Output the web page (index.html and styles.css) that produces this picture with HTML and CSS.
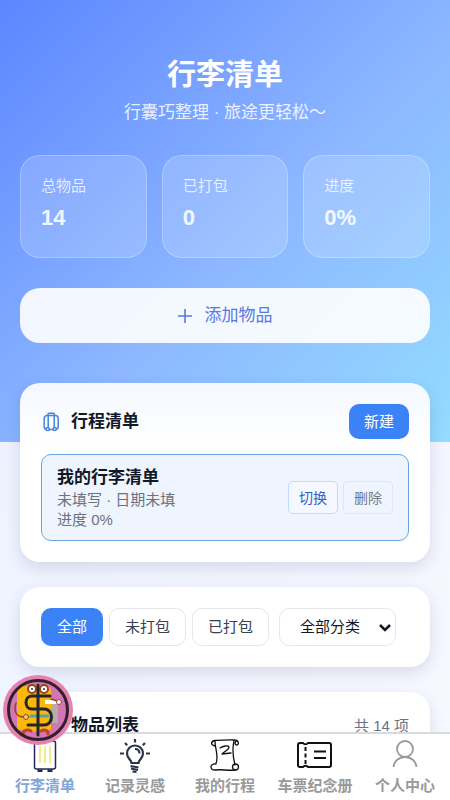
FILE: index.html
```html
<!DOCTYPE html>
<html lang="zh-CN">
<head>
<meta charset="utf-8">
<meta name="viewport" content="width=device-width, initial-scale=1">
<title>行李清单</title>
<link rel="stylesheet" href="styles.css">
</head>
<body>
<div class="app">
  <main class="content">
    <header class="hero">
      <h1>行李清单</h1>
      <p>行囊巧整理 · 旅途更轻松～</p>
    </header>
    <section class="stats">
      <div class="stat"><span>总物品</span><strong>14</strong></div>
      <div class="stat"><span>已打包</span><strong>0</strong></div>
      <div class="stat"><span>进度</span><strong>0%</strong></div>
    </section>
    <button class="add" type="button">
      <svg width="14" height="14" viewBox="0 0 14 14" fill="none" stroke="currentColor" stroke-width="1.6" aria-hidden="true"><path d="M7 0v14M0 7h14"/></svg>
      添加物品
    </button>
    <section class="card trips">
      <div class="card-head">
        <svg class="head-icon" width="20" height="20" viewBox="0 0 20 20" fill="none" stroke="currentColor" stroke-width="1.5" aria-hidden="true"><rect x="3.200" y="3.500" width="14" height="14" rx="3"/><path d="M7 3.500V2.300q0-1 1-1h4.400q1 0 1 1v1.200M7.200 3.500v12M13.200 3.500v12"/><circle cx="6.700" cy="17" r="1.600" fill="#f8fbff"/><circle cx="13.700" cy="17" r="1.600" fill="#f8fbff"/></svg>
        <h2>行程清单</h2>
        <button class="primary new" type="button">新建</button>
      </div>
      <article class="trip">
        <div class="trip-info">
          <h3>我的行李清单</h3>
          <p>未填写 · 日期未填</p>
          <p>进度 0%</p>
        </div>
        <button class="small switch" type="button">切换</button>
        <button class="small delete" type="button">删除</button>
      </article>
    </section>
    <section class="card filters">
      <button class="chip primary" type="button">全部</button>
      <button class="chip" type="button">未打包</button>
      <button class="chip" type="button">已打包</button>
      <div class="category">
        <select aria-label="分类"><option>全部分类</option></select>
        <svg class="chevron" width="12" height="8" viewBox="0 0 12 8" fill="none" stroke="#111827" stroke-width="2.500" aria-hidden="true"><path d="M1 1l5 5 5-5"/></svg>
      </div>
    </section>
    <section class="card items">
      <div class="card-head">
        <span class="head-icon"></span>
        <h2>物品列表</h2>
        <span class="count">共 14 项</span>
      </div>
    </section>
  </main>
  <nav class="tabs">
    <a class="active" href="#list">
      <svg width="36" height="36" viewBox="0 0 36 36" fill="none" stroke="#252a58" stroke-width="1.500" aria-hidden="true"><rect x="7.500" y="3" width="21" height="28" rx="2" fill="#fff"/><path d="M13 8v17M18 8v17M23 8v17" stroke="#eee56c"/><path d="M11.500 31v2h3v-2M21.500 31v2h3v-2" stroke-width="2"/></svg>
      行李清单
    </a>
    <a href="#ideas">
      <svg width="36" height="36" viewBox="0 0 36 36" fill="none" stroke="#2c3448" stroke-width="2.200" aria-hidden="true"><path d="M14.500 25c0-3.500-4.500-4.500-4.500-9.500a8 8 0 0 1 16 0c0 5-4.500 6-4.500 9.500z"/><path d="M18 11c3 0 4.500 2 4.500 4.500M13.500 28l8 1.500M14 30.500l7 1.500M15.500 33.500l4 .5M18 1v3.500M8 5l2.200 2.200M28 5l-2.200 2.200M3 15.500h4M29 15.500h4"/></svg>
      记录灵感
    </a>
    <a href="#trips">
      <svg width="36" height="36" viewBox="0 0 36 36" fill="none" stroke="#111" stroke-width="1.300" stroke-linecap="round" stroke-linejoin="round" aria-hidden="true"><path d="M8 8C3 7 4 3 8 2.500c7-.5 13-1 20-.5 4 0 4 5 2 5-3 0-2-4 0-4M27 3c-2 8-1 16 1 24M8 3c0 8 4 15 1 22.500M9 26c-6-1-7 6-1 6 7-1 13 1 20 0"/><circle cx="28.500" cy="29" r="3"/><path d="M13 10c3-2 8-3 9-1 0 3-4 4-7 7l9-1"/></svg>
      我的行程
    </a>
    <a href="#tickets">
      <svg width="36" height="36" viewBox="0 0 36 36" fill="none" stroke="#111" stroke-width="2" aria-hidden="true"><path d="M3 5h3a3 3 0 0 0 5 0h21q2 0 2 2v20q0 2-2 2H11a3 3 0 0 0-5 0H3q-2 0-2-2V7q0-2 2-2z"/><path d="M8.500 9v4m0 2.500v4m0 2.500v4M17 13.500h12M17 20h12"/></svg>
      车票纪念册
    </a>
    <a href="#me">
      <svg width="36" height="36" viewBox="0 0 36 36" fill="none" stroke="#999" stroke-width="1.800" aria-hidden="true"><circle cx="18" cy="11" r="8"/><path d="M6.500 29c.5-6 5.500-10 11.500-10s11 4 11.500 10"/></svg>
      个人中心
    </a>
  </nav>
  <button class="badge" type="button" aria-label="记账">
    <svg width="70" height="70" viewBox="0 0 70 70" fill="none" stroke-linecap="round" aria-hidden="true"><circle cx="35" cy="35" r="35" fill="#e583b0"/><circle cx="35" cy="35" r="29.500" fill="#d277b4"/><path d="M14 17q0-6 6-6h23q5 0 5 6v37q-17 5-34 0z" fill="#fbb80c"/><path d="M48 29h7v19h-7z" fill="#b5aea8"/><path d="M42 25h14v4H42z" fill="#fff"/><path d="M28 41h17" stroke="#55a6a0" stroke-width="3"/><path d="M20 59c0-4 5-5 8-3M38 56c3-2 7-1 7 3" stroke="#c5431d" stroke-width="3"/><path d="M13 28c-3 9 1 14 8 14M48 24l6 2" stroke="#8d4a20" stroke-width="1.500"/><circle cx="23" cy="42" r="2.500" fill="#f7d270" stroke="#8d4a20"/><circle cx="56" cy="27" r="2.500" fill="#fff" stroke="#a83e2a"/><circle cx="29" cy="14" r="4" fill="#fff" stroke="#98411f" stroke-width="2"/><circle cx="41" cy="14" r="4" fill="#fff" stroke="#98411f" stroke-width="2"/><circle cx="29" cy="14" r="1" fill="#333"/><circle cx="41" cy="14" r="1" fill="#333"/><circle cx="35" cy="35" r="29.500" stroke="#33202f" stroke-width="3"/><path d="M47 21H29c-8 0-8 13 0 13h12c10 0 10 16 0 16H25M35 10v50" stroke="#25252b" stroke-width="3"/></svg>
  </button>
</div>
</body>
</html>
```
FILE: styles.css
```css
* {
  box-sizing: border-box;
}

html,
body {
  height: 100%;
}

body {
  margin: 0;
  overflow: hidden;
  font-family: "Liberation Sans", "Noto Sans CJK SC", sans-serif;
  color: #111827;
}

h1,
h2,
h3,
p {
  margin: 0;
}

button,
select {
  font: inherit;
  margin: 0;
}

svg {
  display: block;
  flex: none;
}

.app {
  position: relative;
  display: flex;
  flex-direction: column;
  height: 100vh;
  background: linear-gradient(135deg, #e8efff, #f8f9ff);
}

.content {
  flex: 1;
  min-height: 0;
  overflow: hidden;
  display: flex;
  flex-direction: column;
  padding: 0 20px;
  background: linear-gradient(135deg, #5b86ff 0%, #8db7ff 55%, #93dcff 100%) top / 100% 442px no-repeat;
}

.content > * {
  flex: none;
}

.hero {
  padding: 53px 0 29px;
  text-align: center;
  color: #fff;
}

.hero h1 {
  font-size: 29px;
  line-height: 44px;
}

.hero p {
  margin-top: 3px;
  font-size: 17px;
  line-height: 26px;
  color: rgba(255, 255, 255, 0.85);
}

.stats {
  display: grid;
  grid-template-columns: repeat(3, 1fr);
  gap: 15px;
}

.stat {
  display: flex;
  flex-direction: column;
  gap: 8px;
  height: 103px;
  padding: 20px;
  border: 1px solid rgba(255, 255, 255, 0.25);
  border-radius: 20px;
  background: rgba(255, 255, 255, 0.16);
  color: rgba(255, 255, 255, 0.9);
}

.stat span {
  font-size: 15px;
  line-height: 20px;
  color: rgba(255, 255, 255, 0.78);
}

.stat strong {
  font-size: 22px;
  line-height: 28px;
}

.add {
  display: flex;
  align-items: center;
  justify-content: center;
  gap: 13px;
  height: 55px;
  margin-top: 30px;
  border: 0;
  border-radius: 20px;
  background: rgba(255, 255, 255, 0.9);
  font-size: 17px;
  line-height: 26px;
  color: #5878df;
}

.card {
  padding: 21px;
  border-radius: 20px;
  background: #fff;
  box-shadow: 0 6px 16px rgba(40, 50, 100, 0.14);
}

.trips {
  margin-top: 40px;
  background: linear-gradient(#f4f8ff, #fff 64px);
}

.card-head {
  display: flex;
  align-items: center;
}

.head-icon {
  width: 20px;
  margin-right: 10px;
  color: #4684da;
}

.card-head h2 {
  flex: 1;
  font-size: 17px;
  line-height: 26px;
}

.primary {
  border: 0;
  background: #3b82f6;
  color: #fff;
}

.new {
  width: 60px;
  height: 35px;
  padding: 0;
  border-radius: 10px;
  font-size: 15px;
  line-height: 20px;
}

.trip {
  display: flex;
  align-items: center;
  gap: 5px;
  margin-top: 15px;
  padding: 10px 15px;
  border: 1px solid #6ba3da;
  border-radius: 10px;
  background: #eff5ff;
}

.trip-info {
  flex: 1;
}

.trip h3 {
  font-size: 17px;
  line-height: 25px;
}

.trip p {
  font-size: 15px;
  line-height: 20px;
  color: #6b7280;
}

.small {
  width: 50px;
  height: 33px;
  padding: 0;
  border: 1px solid #bfdbfe;
  border-radius: 5px;
  font-size: 14px;
  line-height: 20px;
}

.switch {
  background: #f5f9ff;
  color: #315fc8;
}

.delete {
  border-color: #e1e7f2;
  background: transparent;
  color: #747985;
}

.filters {
  display: flex;
  gap: 6px;
  margin-top: 25px;
}

.chip,
.category select {
  height: 38px;
  border: 1px solid #e5e7eb;
  border-radius: 10px;
  background: #fff;
  color: #374151;
  font-size: 15px;
  line-height: 20px;
}

.chip {
  padding: 0 15px;
}

.chip.primary {
  padding: 0 16px;
  border: 0;
  background: #3b82f6;
  color: #fff;
}

.category {
  position: relative;
  width: 117px;
  margin-left: 4px;
}

.category select {
  appearance: none;
  width: 100%;
  padding: 0 0 0 20px;
  color: #111827;
}

.chevron {
  position: absolute;
  right: 5px;
  top: 16px;
  pointer-events: none;
}

.items {
  height: 180px;
  margin-top: 25px;
}

.count {
  font-size: 15px;
  line-height: 20px;
  color: #6b7280;
}

.tabs {
  display: grid;
  grid-template-columns: repeat(5, 1fr);
  height: 68px;
  padding-top: 4px;
  border-top: 2px solid #d9dadd;
  background: #fff;
}

.tabs a {
  display: flex;
  flex-direction: column;
  align-items: center;
  font-size: 15px;
  font-weight: 700;
  line-height: 24px;
  white-space: nowrap;
  text-decoration: none;
  color: #999;
}

.tabs .active {
  color: #82a6d8;
}

.badge {
  position: absolute;
  left: 3px;
  bottom: 55px;
  padding: 0;
  border: 0;
  border-radius: 50%;
  background: none;
}
```
